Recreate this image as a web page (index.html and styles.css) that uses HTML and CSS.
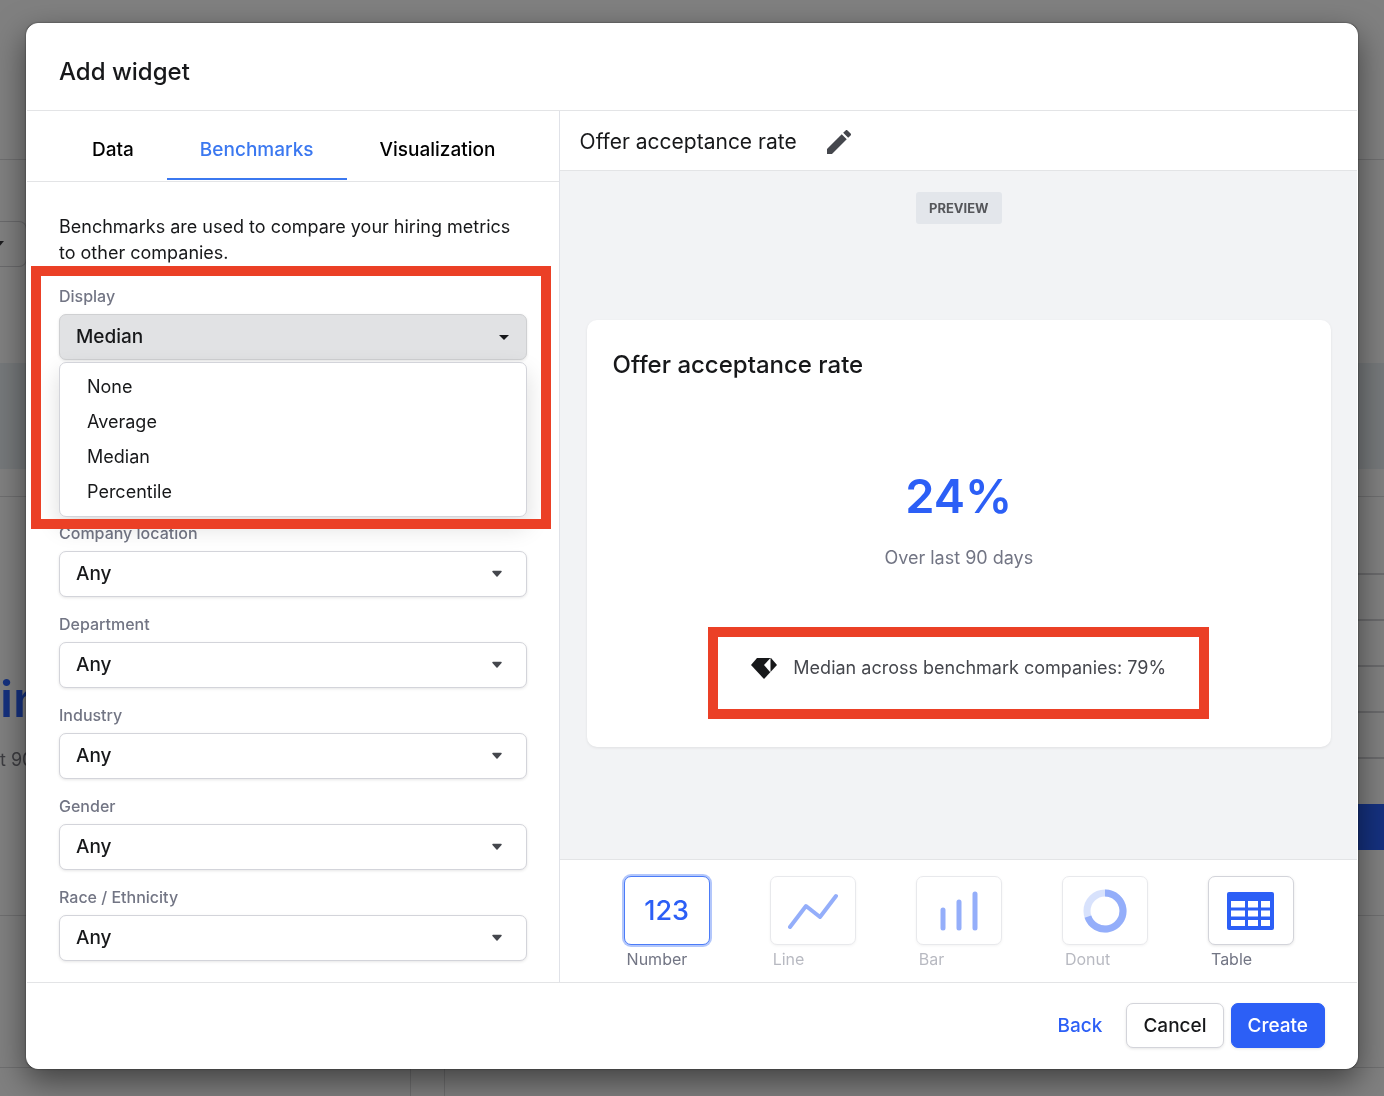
FILE: index.html
```html
<!DOCTYPE html>
<html lang="en">
<head>
    <meta charset="UTF-8">
    <meta name="viewport" content="width=device-width, initial-scale=1.0">
    <title>Add widget</title>
    <link rel="stylesheet" href="styles.css">
</head>
<body>
    <!-- dimmed dashboard behind the dialog -->
    <div class="page" aria-hidden="true">
        <div class="page-header"></div>
        <div class="page-toolbar">
            <div class="page-filter"><svg width="10" height="6" viewBox="0 0 10 6"><path d="M0 0h10L5 6z" fill="#1c1c1e"/></svg></div>
        </div>
        <div class="page-band"></div>
        <div class="page-gap"></div>
        <div class="page-widgets">
            <div>
                <p class="page-number">in</p>
                <p class="page-caption">t 90</p>
            </div>
            <div class="page-list">
                <span></span><span></span><span></span><span></span><span></span>
                <div class="page-cta"></div>
            </div>
        </div>
        <div class="page-row"></div>
        <div class="page-cards">
            <div></div>
            <div></div>
        </div>
    </div>

    <div class="overlay">
        <div class="modal" role="dialog" aria-labelledby="modal-title">
            <header class="modal-header">
                <h1 id="modal-title">Add widget</h1>
            </header>
            <div class="modal-body">
                <section class="settings">
                    <nav class="tabs">
                        <button class="tab">Data</button>
                        <button class="tab active">Benchmarks</button>
                        <button class="tab">Visualization</button>
                    </nav>
                    <div class="settings-form">
                        <p class="intro">Benchmarks are used to compare your hiring metrics to other companies.</p>
                        <div class="field field-open">
                            <label for="display">Display</label>
                            <div class="select">
                                <select id="display"><option>Median</option></select>
                                <svg width="10" height="5" viewBox="0 0 10 5"><path d="M0 0h10L5 5z" fill="#17181a"/></svg>
                            </div>
                            <ul class="menu">
                                <li>None</li>
                                <li>Average</li>
                                <li>Median</li>
                                <li>Percentile</li>
                            </ul>
                            <div class="highlight highlight-field"></div>
                        </div>
                        <div class="field">
                            <label for="location">Company location</label>
                            <div class="select">
                                <select id="location"><option>Any</option></select>
                                <svg width="12" height="8" viewBox="0 0 12 8"><path d="M2 1.500h8L6 6z" fill="#45474d" stroke="#45474d" stroke-width="1.500" stroke-linejoin="round"/></svg>
                            </div>
                        </div>
                        <div class="field">
                            <label for="department">Department</label>
                            <div class="select">
                                <select id="department"><option>Any</option></select>
                                <svg width="12" height="8" viewBox="0 0 12 8"><path d="M2 1.500h8L6 6z" fill="#45474d" stroke="#45474d" stroke-width="1.500" stroke-linejoin="round"/></svg>
                            </div>
                        </div>
                        <div class="field">
                            <label for="industry">Industry</label>
                            <div class="select">
                                <select id="industry"><option>Any</option></select>
                                <svg width="12" height="8" viewBox="0 0 12 8"><path d="M2 1.500h8L6 6z" fill="#45474d" stroke="#45474d" stroke-width="1.500" stroke-linejoin="round"/></svg>
                            </div>
                        </div>
                        <div class="field">
                            <label for="gender">Gender</label>
                            <div class="select">
                                <select id="gender"><option>Any</option></select>
                                <svg width="12" height="8" viewBox="0 0 12 8"><path d="M2 1.500h8L6 6z" fill="#45474d" stroke="#45474d" stroke-width="1.500" stroke-linejoin="round"/></svg>
                            </div>
                        </div>
                        <div class="field">
                            <label for="race">Race / Ethnicity</label>
                            <div class="select">
                                <select id="race"><option>Any</option></select>
                                <svg width="12" height="8" viewBox="0 0 12 8"><path d="M2 1.500h8L6 6z" fill="#45474d" stroke="#45474d" stroke-width="1.500" stroke-linejoin="round"/></svg>
                            </div>
                        </div>
                    </div>
                </section>

                <section class="preview">
                    <div class="preview-title">
                        <h2>Offer acceptance rate</h2>
                        <button class="edit" aria-label="Edit name">
                            <svg width="24" height="24" viewBox="3 3 18 18"><path fill="#45474d" d="M3 17.250V21h3.750L17.810 9.940l-3.750-3.750L3 17.250zM20.710 7.040a.996.996 0 0 0 0-1.410l-2.340-2.340a.996.996 0 0 0-1.410 0l-1.830 1.830 3.750 3.750 1.830-1.830z"/></svg>
                        </button>
                    </div>
                    <div class="preview-area">
                        <span class="badge">PREVIEW</span>
                        <div class="card">
                            <h3>Offer acceptance rate</h3>
                            <p class="value">24%</p>
                            <p class="period">Over last 90 days</p>
                            <div class="benchmark">
                                <svg width="26" height="21" viewBox="0 0 26 21"><path fill="#17181a" d="M6 0h14l6 7-13 14L0 7z"/><path fill="#fff" d="M19.500 0v14.500L13 7z"/></svg>
                                <span>Median across benchmark companies: 79%</span>
                                <div class="highlight highlight-benchmark"></div>
                            </div>
                        </div>
                    </div>
                    <div class="charts">
                        <div class="chart selected">
                            <button id="chart-number" aria-label="Number">123</button>
                            <label for="chart-number">Number</label>
                        </div>
                        <div class="chart disabled">
                            <button id="chart-line" aria-label="Line">
                                <svg width="50" height="36" viewBox="0 0 50 36"><path d="M2 34 18 13l14 11L48 3" fill="none" stroke="#2c5ff6" stroke-width="4" stroke-linecap="round" stroke-linejoin="round"/></svg>
                            </button>
                            <label for="chart-line">Line</label>
                        </div>
                        <div class="chart disabled">
                            <button id="chart-bar" aria-label="Bar">
                                <svg width="38" height="42" viewBox="0 0 38 42"><path d="M3 20v18M19 12v26M35 4v34" stroke="#2c5ff6" stroke-width="5" stroke-linecap="round"/></svg>
                            </button>
                            <label for="chart-bar">Bar</label>
                        </div>
                        <div class="chart disabled">
                            <button id="chart-donut" aria-label="Donut">
                                <svg width="44" height="44" viewBox="0 0 44 44" fill="none" stroke-width="7"><circle cx="22" cy="22" r="18" stroke="#b3c7fb"/><path d="M22 4a18 18 0 1 1-17.100 23.600" stroke="#2c5ff6"/></svg>
                            </button>
                            <label for="chart-donut">Donut</label>
                        </div>
                        <div class="chart">
                            <button id="chart-table" aria-label="Table">
                                <svg width="47" height="38" viewBox="0 0 47 38"><rect width="47" height="38" rx="2" fill="#2c5ff6"/><path fill="#fff" d="M4 9h14v6.500H4zM21 9h10v6.500H21zM34 9h9v6.500h-9zM4 18.500h14v6H4zM21 18.500h10v6H21zM34 18.500h9v6h-9zM4 28h14v6H4zM21 28h10v6H21zM34 28h9v6h-9z"/></svg>
                            </button>
                            <label for="chart-table">Table</label>
                        </div>
                    </div>
                </section>
            </div>
            <footer class="modal-footer">
                <button class="button link">Back</button>
                <button class="button">Cancel</button>
                <button class="button primary">Create</button>
            </footer>
        </div>
    </div>
</body>
</html>
```
FILE: styles.css
```css
* {
    box-sizing: border-box;
}
body {
    margin: 0;
    background: #808080;
    color: #17181a;
    font-family: Inter, "Liberation Sans", sans-serif;
    font-size: 18px;
    line-height: 26px;
}
h1, h2, h3, p, ul {
    margin: 0;
    padding: 0;
}
button, select {
    font: inherit;
    color: inherit;
    cursor: pointer;
}

/* dimmed page */
.page {
    position: fixed;
    inset: 0;
    overflow: hidden;
    display: flex;
    flex-direction: column;
}
.page-header {
    height: 160px;
    border-bottom: 1px solid #6f6f70;
}
.page-toolbar {
    height: 203px;
    padding-top: 61px;
}
.page-filter {
    width: 27px;
    height: 46px;
    padding-top: 6px;
    border: 1px solid #6a6a6c;
    border-left: 0;
    border-radius: 0 8px 8px 0;
}
.page-filter svg {
    margin-left: -6px;
}
.page-band {
    height: 106px;
    background: #76797b;
}
.page-gap {
    height: 28px;
    border-bottom: 1px solid #6f6f70;
}
.page-widgets {
    height: 419px;
    display: flex;
    justify-content: space-between;
    border-bottom: 1px solid #6f6f70;
}
.page-number {
    margin-top: 170px;
    color: #15317f;
    font-size: 50px;
    font-weight: 600;
    line-height: 64px;
}
.page-caption {
    margin-top: 16px;
    color: #3c3c40;
}
.page-list {
    width: 27px;
    padding-top: 32px;
}
.page-list span {
    display: block;
    height: 46px;
    border-bottom: 2px solid #6a6a6c;
}
.page-cta {
    height: 46px;
    background: #15317f;
    margin-top: 45px;
}
.page-row {
    height: 152px;
    border-bottom: 1px solid #6f6f70;
}
.page-cards {
    flex: 1;
    display: flex;
    gap: 33px;
}
.page-cards div {
    width: 411px;
    border-right: 1px solid #6f6f70;
}
.page-cards div + div {
    flex: 1;
    border-right: 0;
    border-left: 1px solid #6f6f70;
}

/* dialog */
.overlay {
    position: relative;
    min-height: 100vh;
    display: flex;
    padding: 23px 26px 27px;
}
.modal {
    flex: 1;
    display: flex;
    flex-direction: column;
    background: #fff;
    border: 1px solid #fff;
    border-radius: 12px;
    box-shadow: 0 0 2px rgba(0, 0, 0, 0.6), 0 12px 32px rgba(0, 0, 0, 0.5);
}
.modal-header {
    padding: 31px 32px 22px;
    border-bottom: 1px solid #e3e4e6;
}
h1, h3 {
    font-size: 24px;
    font-weight: 500;
    line-height: 33px;
}
.modal-body {
    flex: 1;
    display: flex;
}
.settings {
    flex: 2;
    border-right: 1px solid #e0e2e8;
}
.tabs {
    display: flex;
    padding: 0 0 1px 32px;
    border-bottom: 1px solid #e3e4e6;
}
.tab {
    height: 69px;
    padding: 11px 33px 0;
    border: 0;
    border-bottom: 2px solid transparent;
    background: none;
    color: #000;
    font-size: 19px;
    font-weight: 500;
}
.tab.active {
    color: #3b78f0;
    border-color: #3b78f0;
}
.settings-form {
    padding: 32px 32px 21px;
}
.intro {
    margin-bottom: 20px;
}
.field {
    margin-bottom: 17px;
}
.field:last-child {
    margin-bottom: 0;
}
.field-open {
    position: relative;
    margin-bottom: 163px;
}
.field label {
    display: block;
    margin-bottom: 8px;
    color: #727584;
    font-size: 16px;
    font-weight: 500;
    line-height: 20px;
}
.select {
    display: grid;
    align-items: center;
}
.select select {
    grid-area: 1 / 1;
    width: 100%;
    height: 46px;
    padding: 0 16px;
    appearance: none;
    background: #fff;
    border: 1px solid #d3d4da;
    border-radius: 7px;
    box-shadow: 0 1px 3px rgba(0, 0, 0, 0.1);
    font-size: 19px;
    font-weight: 500;
}
.select svg {
    grid-area: 1 / 1;
    justify-self: end;
    margin-right: 24px;
    pointer-events: none;
}
.field-open select {
    background: #e1e2e4;
    border-color: #cfd0d2;
}
.field-open .select svg {
    margin-right: 18px;
}
.menu {
    position: absolute;
    z-index: 1;
    top: 76px;
    left: 0;
    right: 0;
    padding: 6px 27px 7px;
    background: #fff;
    border: 1px solid #d3d4da;
    border-radius: 7px;
    box-shadow: 0 10px 24px rgba(0, 0, 0, 0.14);
    list-style: none;
}
.menu li {
    line-height: 35px;
}
.highlight {
    position: absolute;
    z-index: 2;
    border: 10px solid #eb4026;
    pointer-events: none;
}
.highlight-field {
    top: -20px;
    left: -28px;
    right: -24px;
    height: 263px;
}
.highlight-benchmark {
    inset: -28px -43px -38px;
}

/* preview */
.preview {
    flex: 3;
    display: flex;
    flex-direction: column;
}
.preview-title {
    display: flex;
    align-items: center;
    gap: 30px;
    height: 60px;
    padding: 2px 20px 0;
    border-bottom: 1px solid #e3e4e6;
}
.preview-title h2 {
    font-size: 21px;
    font-weight: 400;
}
.edit {
    display: flex;
    padding: 0;
    border: 0;
    background: none;
}
.preview-area {
    flex: 1;
    display: flex;
    flex-direction: column;
    align-items: center;
    padding: 21px 26px 112px 27px;
    background: #f2f3f5;
    border-bottom: 1px solid #e3e4e6;
}
.badge {
    padding: 3px 13px;
    border-radius: 3px;
    background: #e3e6eb;
    color: #55565a;
    font-size: 13px;
    font-weight: 700;
}
.card {
    flex: 1;
    align-self: stretch;
    display: flex;
    flex-direction: column;
    align-items: center;
    margin-top: 96px;
    padding: 28px 26px;
    background: #fff;
    border-radius: 10px;
    box-shadow: 0 1px 3px rgba(0, 0, 0, 0.08);
}
.card h3 {
    align-self: flex-start;
}
.value {
    margin-top: 83px;
    color: #2c5ff6;
    font-size: 47px;
    font-weight: 600;
    line-height: 64px;
}
.period {
    margin-top: 17px;
    color: #727584;
}
.benchmark {
    position: relative;
    display: flex;
    align-items: center;
    gap: 16px;
    margin-top: 84px;
    color: #45474d;
}
.charts {
    display: flex;
    justify-content: space-between;
    padding: 16px 63px 12px 64px;
}
.chart button {
    display: flex;
    align-items: center;
    justify-content: center;
    width: 86px;
    height: 69px;
    padding: 0;
    background: #fff;
    border: 1px solid #d3d4da;
    border-radius: 7px;
    box-shadow: 0 1px 3px rgba(0, 0, 0, 0.1);
}
.chart label {
    display: block;
    padding: 3px 3px 0;
    color: #727584;
    font-size: 16px;
    line-height: 22px;
}
.chart.disabled {
    opacity: 0.5;
}
.chart.selected button {
    color: #2c5ff6;
    border-color: #4c7cf8;
    box-shadow: 0 0 0 2px #b3c7fb;
    font-size: 27px;
    font-weight: 500;
}

/* footer */
.modal-footer {
    display: flex;
    justify-content: flex-end;
    gap: 7px;
    padding: 20px 32px;
    border-top: 1px solid #e3e4e6;
}
.button {
    height: 45px;
    padding: 0 16px;
    background: #fff;
    border: 1px solid #d3d4da;
    border-radius: 7px;
    box-shadow: 0 1px 3px rgba(0, 0, 0, 0.1);
    font-size: 19px;
    font-weight: 500;
}
.button.primary {
    background: #2c5ff6;
    border-color: #2c5ff6;
    color: #fff;
}
.button.link {
    border-color: transparent;
    box-shadow: none;
    color: #2c5ff6;
}
```
